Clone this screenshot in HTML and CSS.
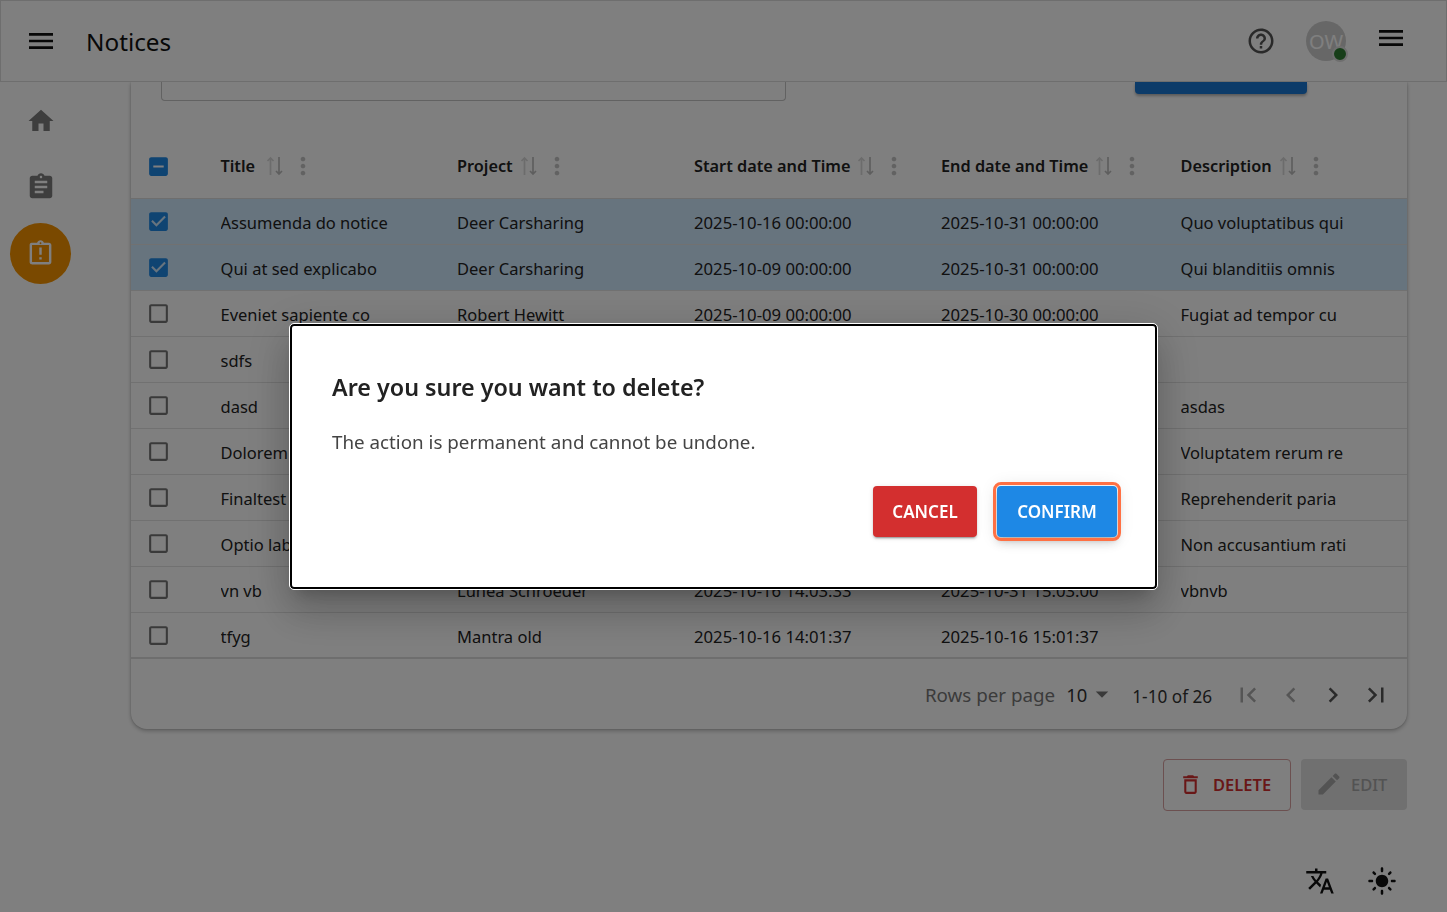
FILE: index.html
```html
<!DOCTYPE html>
<html lang="en">
<head>
<meta charset="utf-8">
<title>Notices</title>
<link rel="stylesheet" href="styles.css">
</head>
<body>
<svg class="sprite" width="0" height="0">
  <symbol id="i-menu" viewBox="0 0 24 24"><path d="M3 18h18v-2H3v2zm0-5h18v-2H3v2zm0-7v2h18V6H3z"/></symbol>
  <symbol id="i-home" viewBox="0 0 24 24"><path d="M10 20v-6h4v6h5v-8h3L12 3 2 12h3v8z"/></symbol>
  <symbol id="i-assign" viewBox="0 0 24 24"><path d="M19 3h-4.18C14.4 1.84 13.3 1 12 1c-1.3 0-2.4.84-2.82 2H5c-1.1 0-2 .9-2 2v14c0 1.1.9 2 2 2h14c1.1 0 2-.9 2-2V5c0-1.1-.9-2-2-2zm-7 0c.55 0 1 .45 1 1s-.45 1-1 1-1-.45-1-1 .45-1 1-1zm2 14H7v-2h7v2zm3-4H7v-2h10v2zm0-4H7V7h10v2z"/></symbol>
  <symbol id="i-late" viewBox="0 0 24 24"><path d="M11 15h2v2h-2zm0-8h2v6h-2zm8-4h-4.18C14.4 1.84 13.3 1 12 1c-1.3 0-2.4.84-2.82 2H5c-.14 0-.27.01-.4.04-.39.08-.74.28-1.01.55-.18.18-.33.4-.43.64-.1.23-.16.49-.16.77v14c0 .27.06.54.16.78s.25.45.43.64c.27.27.62.47 1.01.55.13.02.26.03.4.03h14c1.1 0 2-.9 2-2V5c0-1.1-.9-2-2-2zm-7-.25c.41 0 .75.34.75.75s-.34.75-.75.75-.75-.34-.75-.75.34-.75.75-.75zM19 19H5V5h14v14z"/></symbol>
  <symbol id="i-help" viewBox="0 0 24 24"><path d="M11 18h2v-2h-2v2zm1-16C6.48 2 2 6.48 2 12s4.48 10 10 10 10-4.48 10-10S17.52 2 12 2zm0 18c-4.41 0-8-3.59-8-8s3.59-8 8-8 8 3.59 8 8-3.59 8-8 8zm0-14c-2.21 0-4 1.79-4 4h2c0-1.1.9-2 2-2s2 .9 2 2c0 2-3 1.75-3 5h2c0-2.25 3-2.5 3-5 0-2.21-1.79-4-4-4z"/></symbol>
  <symbol id="i-checked" viewBox="0 0 24 24"><path d="M19 3H5c-1.11 0-2 .9-2 2v14c0 1.1.89 2 2 2h14c1.11 0 2-.9 2-2V5c0-1.1-.89-2-2-2zm-9 14l-5-5 1.41-1.41L10 14.17l7.59-7.59L19 8l-9 9z"/></symbol>
  <symbol id="i-unchecked" viewBox="0 0 24 24"><path d="M19 5v14H5V5h14m0-2H5c-1.1 0-2 .9-2 2v14c0 1.1.9 2 2 2h14c1.1 0 2-.9 2-2V5c0-1.1-.9-2-2-2z"/></symbol>
  <symbol id="i-indet" viewBox="0 0 24 24"><path d="M19 3H5c-1.1 0-2 .9-2 2v14c0 1.1.9 2 2 2h14c1.1 0 2-.9 2-2V5c0-1.1-.9-2-2-2zm-2 10H7v-2h10v2z"/></symbol>
  <symbol id="i-sort" viewBox="0 0 24 24"><path class="sort-up" d="M7.5 21V4M4.5 7l3-3 3 3"/><path class="sort-down" d="M16 3v17M13 17l3 3 3-3"/></symbol>
  <symbol id="i-more" viewBox="0 0 24 24"><path d="M12 8c1.1 0 2-.9 2-2s-.9-2-2-2-2 .9-2 2 .9 2 2 2zm0 2c-1.1 0-2 .9-2 2s.9 2 2 2 2-.9 2-2-.9-2-2-2zm0 6c-1.1 0-2 .9-2 2s.9 2 2 2 2-.9 2-2-.9-2-2-2z"/></symbol>
  <symbol id="i-drop" viewBox="0 0 24 24"><path d="M7 10l5 5 5-5z"/></symbol>
  <symbol id="i-first" viewBox="0 0 24 24"><path d="M18.41 16.59L13.82 12l4.59-4.59L17 6l-6 6 6 6zM6 6h2v12H6z"/></symbol>
  <symbol id="i-prev" viewBox="0 0 24 24"><path d="M15.41 7.41L14 6l-6 6 6 6 1.41-1.41L10.83 12z"/></symbol>
  <symbol id="i-next" viewBox="0 0 24 24"><path d="M10 6L8.59 7.41 13.17 12l-4.58 4.59L10 18l6-6z"/></symbol>
  <symbol id="i-last" viewBox="0 0 24 24"><path d="M5.59 7.41L10.18 12l-4.59 4.59L7 18l6-6-6-6zM16 6h2v12h-2z"/></symbol>
  <symbol id="i-trash" viewBox="0 0 24 24"><path d="M6 19c0 1.1.9 2 2 2h8c1.1 0 2-.9 2-2V7H6v12zM8 9h8v10H8V9zm7.5-5l-1-1h-5l-1 1H5v2h14V4z"/></symbol>
  <symbol id="i-edit" viewBox="0 0 24 24"><path d="M3 17.25V21h3.75L17.81 9.94l-3.75-3.75L3 17.25zM20.71 7.04c.39-.39.39-1.02 0-1.41l-2.34-2.34c-.39-.39-1.02-.39-1.41 0l-1.83 1.83 3.75 3.75 1.83-1.83z"/></symbol>
  <symbol id="i-translate" viewBox="0 0 24 24"><path d="M12.87 15.07l-2.54-2.51.03-.03c1.74-1.94 2.98-4.17 3.71-6.53H17V4h-7V2H8v2H1v1.99h11.17C11.5 7.92 10.44 9.75 9 11.35 8.07 10.32 7.3 9.19 6.69 8h-2c.73 1.63 1.73 3.17 2.98 4.56l-5.09 5.02L4 19l5-5 3.11 3.11.76-2.04zM18.5 10h-2L12 22h2l1.12-3h4.75L21 22h2l-4.5-12zm-2.62 7l1.62-4.33L19.12 17h-3.24z"/></symbol>
  <symbol id="i-sun" viewBox="0 0 24 24"><path d="M12 7c-2.76 0-5 2.24-5 5s2.24 5 5 5 5-2.24 5-5-2.24-5-5-5zM2 13h2c.55 0 1-.45 1-1s-.45-1-1-1H2c-.55 0-1 .45-1 1s.45 1 1 1zm18 0h2c.55 0 1-.45 1-1s-.45-1-1-1h-2c-.55 0-1 .45-1 1s.45 1 1 1zM11 2v2c0 .55.45 1 1 1s1-.45 1-1V2c0-.55-.45-1-1-1s-1 .45-1 1zm0 18v2c0 .55.45 1 1 1s1-.45 1-1v-2c0-.55-.45-1-1-1s-1 .45-1 1zM5.99 4.58c-.39-.39-1.03-.39-1.41 0-.39.39-.39 1.03 0 1.41l1.06 1.06c.39.39 1.03.39 1.41 0s.39-1.03 0-1.41L5.99 4.58zm12.37 12.37c-.39-.39-1.03-.39-1.41 0-.39.39-.39 1.03 0 1.41l1.06 1.06c.39.39 1.03.39 1.41 0 .39-.39.39-1.03 0-1.41l-1.06-1.06zm1.06-10.96c.39-.39.39-1.03 0-1.41-.39-.39-1.03-.39-1.41 0l-1.06 1.06c-.39.39-.39 1.03 0 1.41s1.03.39 1.41 0l1.06-1.06zM7.05 18.36c.39-.39.39-1.03 0-1.41-.39-.39-1.03-.39-1.41 0l-1.06 1.06c-.39.39-.39 1.03 0 1.41s1.03.39 1.41 0l1.06-1.06z"/></symbol>
</svg>

<div class="page">
  <header class="topbar">
    <svg class="icon ic-menu"><use href="#i-menu"/></svg>
    <h1 class="page-title">Notices</h1>
    <svg class="icon ic-help"><use href="#i-help"/></svg>
    <div class="avatar">OW<span class="status-dot"></span></div>
    <svg class="icon ic-menu ic-menu-right"><use href="#i-menu"/></svg>
  </header>

  <div class="shell">
    <nav class="sidebar">
      <svg class="icon nav-icon"><use href="#i-home"/></svg>
      <svg class="icon nav-icon"><use href="#i-assign"/></svg>
      <div class="nav-active"><svg class="icon"><use href="#i-late"/></svg></div>
    </nav>

    <main class="content">
      <section class="card">
        <div class="filters">
          <div class="filter-field"></div>
          <div class="filter-button"></div>
        </div>
        <div class="grid grid-head">
          <div class="cell-check"><svg class="icon box-blue"><use href="#i-indet"/></svg></div>
          <div class="th th-title"><span>Title</span><svg class="icon sort"><use href="#i-sort"/></svg><svg class="icon more"><use href="#i-more"/></svg></div>
          <div class="th"><span>Project</span><svg class="icon sort"><use href="#i-sort"/></svg><svg class="icon more"><use href="#i-more"/></svg></div>
          <div class="th"><span>Start date and Time</span><svg class="icon sort"><use href="#i-sort"/></svg><svg class="icon more"><use href="#i-more"/></svg></div>
          <div class="th"><span>End date and Time</span><svg class="icon sort"><use href="#i-sort"/></svg><svg class="icon more"><use href="#i-more"/></svg></div>
          <div class="th"><span>Description</span><svg class="icon sort"><use href="#i-sort"/></svg><svg class="icon more"><use href="#i-more"/></svg></div>
        </div>
        <div class="grid row selected"><div class="cell-check"><svg class="icon box-blue"><use href="#i-checked"/></svg></div><div>Assumenda do notice</div><div>Deer Carsharing</div><div>2025-10-16 00:00:00</div><div>2025-10-31 00:00:00</div><div>Quo voluptatibus qui</div></div>
        <div class="grid row selected"><div class="cell-check"><svg class="icon box-blue"><use href="#i-checked"/></svg></div><div>Qui at sed explicabo</div><div>Deer Carsharing</div><div>2025-10-09 00:00:00</div><div>2025-10-31 00:00:00</div><div>Qui blanditiis omnis</div></div>
        <div class="grid row"><div class="cell-check"><svg class="icon box"><use href="#i-unchecked"/></svg></div><div>Eveniet sapiente co</div><div>Robert Hewitt</div><div>2025-10-09 00:00:00</div><div>2025-10-30 00:00:00</div><div>Fugiat ad tempor cu</div></div>
        <div class="grid row"><div class="cell-check"><svg class="icon box"><use href="#i-unchecked"/></svg></div><div>sdfs</div><div>Mantra old</div><div>2025-10-16 14:05:00</div><div>2025-10-31 15:05:00</div><div></div></div>
        <div class="grid row"><div class="cell-check"><svg class="icon box"><use href="#i-unchecked"/></svg></div><div>dasd</div><div>Mantra old</div><div>2025-10-16 14:05:00</div><div>2025-10-31 15:05:00</div><div>asdas</div></div>
        <div class="grid row"><div class="cell-check"><svg class="icon box"><use href="#i-unchecked"/></svg></div><div>Dolorem quia</div><div>Lunea Schroeder</div><div>2025-10-16 14:05:00</div><div>2025-10-31 15:05:00</div><div>Voluptatem rerum re</div></div>
        <div class="grid row"><div class="cell-check"><svg class="icon box"><use href="#i-unchecked"/></svg></div><div>Finaltest</div><div>Lunea Schroeder</div><div>2025-10-16 14:05:00</div><div>2025-10-31 15:05:00</div><div>Reprehenderit paria</div></div>
        <div class="grid row"><div class="cell-check"><svg class="icon box"><use href="#i-unchecked"/></svg></div><div>Optio labore</div><div>Lunea Schroeder</div><div>2025-10-16 14:05:00</div><div>2025-10-31 15:05:00</div><div>Non accusantium rati</div></div>
        <div class="grid row"><div class="cell-check"><svg class="icon box"><use href="#i-unchecked"/></svg></div><div>vn vb</div><div>Lunea Schroeder</div><div>2025-10-16 14:03:33</div><div>2025-10-31 15:03:00</div><div>vbnvb</div></div>
        <div class="grid row row-last"><div class="cell-check"><svg class="icon box"><use href="#i-unchecked"/></svg></div><div>tfyg</div><div>Mantra old</div><div>2025-10-16 14:01:37</div><div>2025-10-16 15:01:37</div><div></div></div>
        <div class="pager">
          <span class="pager-label">Rows per page</span>
          <span class="pager-size">10</span>
          <svg class="icon pager-drop"><use href="#i-drop"/></svg>
          <span class="pager-range">1-10 of 26</span>
          <svg class="icon pager-btn dim"><use href="#i-first"/></svg>
          <svg class="icon pager-btn dim"><use href="#i-prev"/></svg>
          <svg class="icon pager-btn"><use href="#i-next"/></svg>
          <svg class="icon pager-btn"><use href="#i-last"/></svg>
        </div>
      </section>

      <div class="actions">
        <button class="btn-delete"><svg class="icon"><use href="#i-trash"/></svg>DELETE</button>
        <button class="btn-edit"><svg class="icon"><use href="#i-edit"/></svg>EDIT</button>
      </div>
      <div class="footer-tools">
        <svg class="icon tool"><use href="#i-translate"/></svg>
        <svg class="icon tool"><use href="#i-sun"/></svg>
      </div>
    </main>
  </div>
</div>

<div class="backdrop">
  <div class="dialog" role="dialog">
    <h2 class="dialog-title">Are you sure you want to delete?</h2>
    <p class="dialog-text">The action is permanent and cannot be undone.</p>
    <div class="dialog-actions">
      <button class="btn-cancel">CANCEL</button>
      <button class="btn-confirm">CONFIRM</button>
    </div>
  </div>
</div>
</body>
</html>
```

FILE: styles.css
```css
* { box-sizing: border-box; }
html, body { margin: 0; height: 100%; overflow: hidden; }
body { background: #fff; color: #222; font-family: "Noto Sans", "Open Sans", sans-serif; font-size: 16.5px; }
.sprite { position: absolute; }
.icon { width: 24px; height: 24px; fill: currentColor; flex: none; display: block; }
.page { height: 912px; display: flex; flex-direction: column; }

.topbar { height: 82px; flex: none; display: flex; align-items: center; background: #fff; border: 1px solid #ddd; padding: 0 39px 0 24px; position: relative; z-index: 2; color: #111; }
.ic-menu { width: 32px; height: 32px; }
.page-title { font-size: 24.3px; font-weight: 400; margin: 0 auto 0 29px; color: #111; }
.ic-help { width: 30px; height: 30px; color: #555; margin-right: 30px; }
.avatar { width: 40px; height: 40px; border-radius: 50%; background: #cfcfcf; color: #fff; font-size: 20px; display: flex; align-items: center; justify-content: center; position: relative; margin-right: 29px; }
.status-dot { position: absolute; right: -2px; bottom: -1px; width: 16px; height: 16px; border-radius: 50%; background: #2e7d32; border: 2px solid #ddd; }
.ic-menu-right { margin-top: -7px; }

.shell { flex: 1; display: flex; min-height: 0; }
.sidebar { width: 131px; flex: none; padding: 0 0 0 10px; display: flex; flex-direction: column; }
.nav-icon { width: 30px; height: 30px; color: #7c7c7c; margin: 24px 0 0 16px; }
.nav-icon + .nav-icon { margin-top: 36px; }
.nav-active { width: 61px; height: 61px; border-radius: 50%; background: #f59300; color: #fff; display: flex; align-items: center; justify-content: center; margin-top: 21px; }
.nav-active .icon { width: 29px; height: 29px; }

.content { flex: 1; min-width: 0; padding-right: 40px; display: flex; flex-direction: column; }
.card { height: 647px; flex: none; background: #fff; border-radius: 0 0 16px 16px; box-shadow: 0 2px 4px rgba(0,0,0,.25), 0 0 2px rgba(0,0,0,.18); }
.filters { height: 53px; position: relative; }
.filter-field { position: absolute; left: 30px; top: 0; width: 625px; height: 19px; border: 1px solid #c4c4c4; border-top: 0; border-radius: 0 0 4px 4px; }
.filter-button { position: absolute; left: 1004px; top: 0; width: 172px; height: 12px; background: #1976d2; border-radius: 0 0 4px 4px; box-shadow: 0 2px 3px rgba(0,0,0,.3); }

.grid { display: grid; grid-template-columns: 89.5px 236.5px 237px 247px 239.5px 1fr; align-items: center; }
.grid-head { height: 64px; padding-bottom: 1px; border-bottom: 1px solid #ddd; font-weight: 600; font-size: 16.3px; }
.cell-check { padding-left: 15px; }
.cell-check .icon { width: 25px; height: 25px; }
.th { display: flex; align-items: center; }
.sort { width: 24px; height: 24px; margin-left: 4px; fill: none; stroke-width: 1.7; }
.sort-up { stroke: #d8d8d8; }
.sort-down { stroke: #bdbdbd; }
.th-title .sort { margin-left: 8px; }
.more { width: 28px; height: 28px; color: #c4c4c4; margin-left: 2px; }
.row { height: 46px; border-bottom: 1px solid #e2e2e2; }
.row > div:not(.cell-check) { white-space: nowrap; overflow: hidden; padding-top: 2px; }
.row > div:nth-child(4), .row > div:nth-child(5) { font-size: 16.7px; }
.row.selected { background: #cfe8fd; }
.row-last { border-bottom: 2px solid #ddd; }
.box-blue { color: #1e88e5; }
.box { color: #757575; }

.pager { height: 70px; display: flex; align-items: center; justify-content: flex-end; padding: 2px 16px 0 0; color: #333; }
.pager-label { color: #777; font-size: 18.8px; }
.pager-size { margin-left: 11px; font-size: 18.4px; margin-top: -2px; }
.pager-drop { width: 30px; height: 30px; color: #757575; margin-left: 0; margin-top: -2px; }
.pager-range { margin-left: 15px; margin-right: 21px; font-size: 17.2px; margin-top: 3px; }
.pager-btn { width: 30px; height: 30px; margin-left: 12.6px; color: #555; }
.pager-range + .pager-btn { margin-left: 0; }
.pager-btn.dim { color: #aaa; }

.actions { display: flex; justify-content: flex-end; gap: 10px; margin-top: 30px; }
.actions button { font: inherit; font-weight: 600; display: flex; align-items: center; height: 52px; border-radius: 4px; padding-bottom: 2px; }
.btn-delete { background: transparent; border: 1px solid #d8a0a0; color: #d32f2f; width: 128px; padding-left: 14px; gap: 10px; }
.btn-delete .icon { width: 25px; height: 25px; }
.btn-edit { background: #e0e0e0; border: 0; color: #a6a6a6; width: 106px; height: 51px !important; padding-left: 14px; gap: 8px; font-weight: 500 !important; }
.btn-edit .icon { width: 28px; height: 28px; }
.footer-tools { display: flex; justify-content: flex-end; gap: 32px; padding-right: 10px; margin-top: 55px; color: #111; }
.tool { width: 30px; height: 30px; }

.backdrop { position: fixed; inset: 0; background: rgba(0,0,0,.5); display: flex; align-items: center; justify-content: center; z-index: 10; }
.dialog { width: 867px; height: 265px; background: #fff; border: 2px solid #000; outline: 1px solid #fff; border-radius: 4px; padding: 43px 38px 0 40px; box-shadow: 0 11px 15px -7px rgba(0,0,0,.2), 0 24px 38px 3px rgba(0,0,0,.14), 0 9px 46px 8px rgba(0,0,0,.12); }
.dialog-title { margin: 0; font-size: 23.3px; font-weight: 600; line-height: 36px; color: #222; }
.dialog-text { margin: 23px 0 0; font-size: 18.8px; line-height: 28px; color: #444; }
.dialog-actions { display: flex; justify-content: flex-end; gap: 20px; margin-top: 30px; }
.dialog-actions button { font: inherit; font-size: 17px; font-weight: 600; color: #fff; border: 0; border-radius: 4px; height: 51px; box-shadow: 0 3px 1px -2px rgba(0,0,0,.2), 0 2px 2px rgba(0,0,0,.14), 0 1px 5px rgba(0,0,0,.12); }
.btn-cancel { background: #d32f2f; width: 104px; }
.dialog-actions .btn-confirm { background: #1e88e5; width: 120px; outline: 3px solid #ff7043; outline-offset: 1px; box-shadow: 0 3px 5px -1px rgba(0,0,0,.2), 0 6px 10px rgba(0,0,0,.14), 0 1px 18px rgba(0,0,0,.12); }
```
